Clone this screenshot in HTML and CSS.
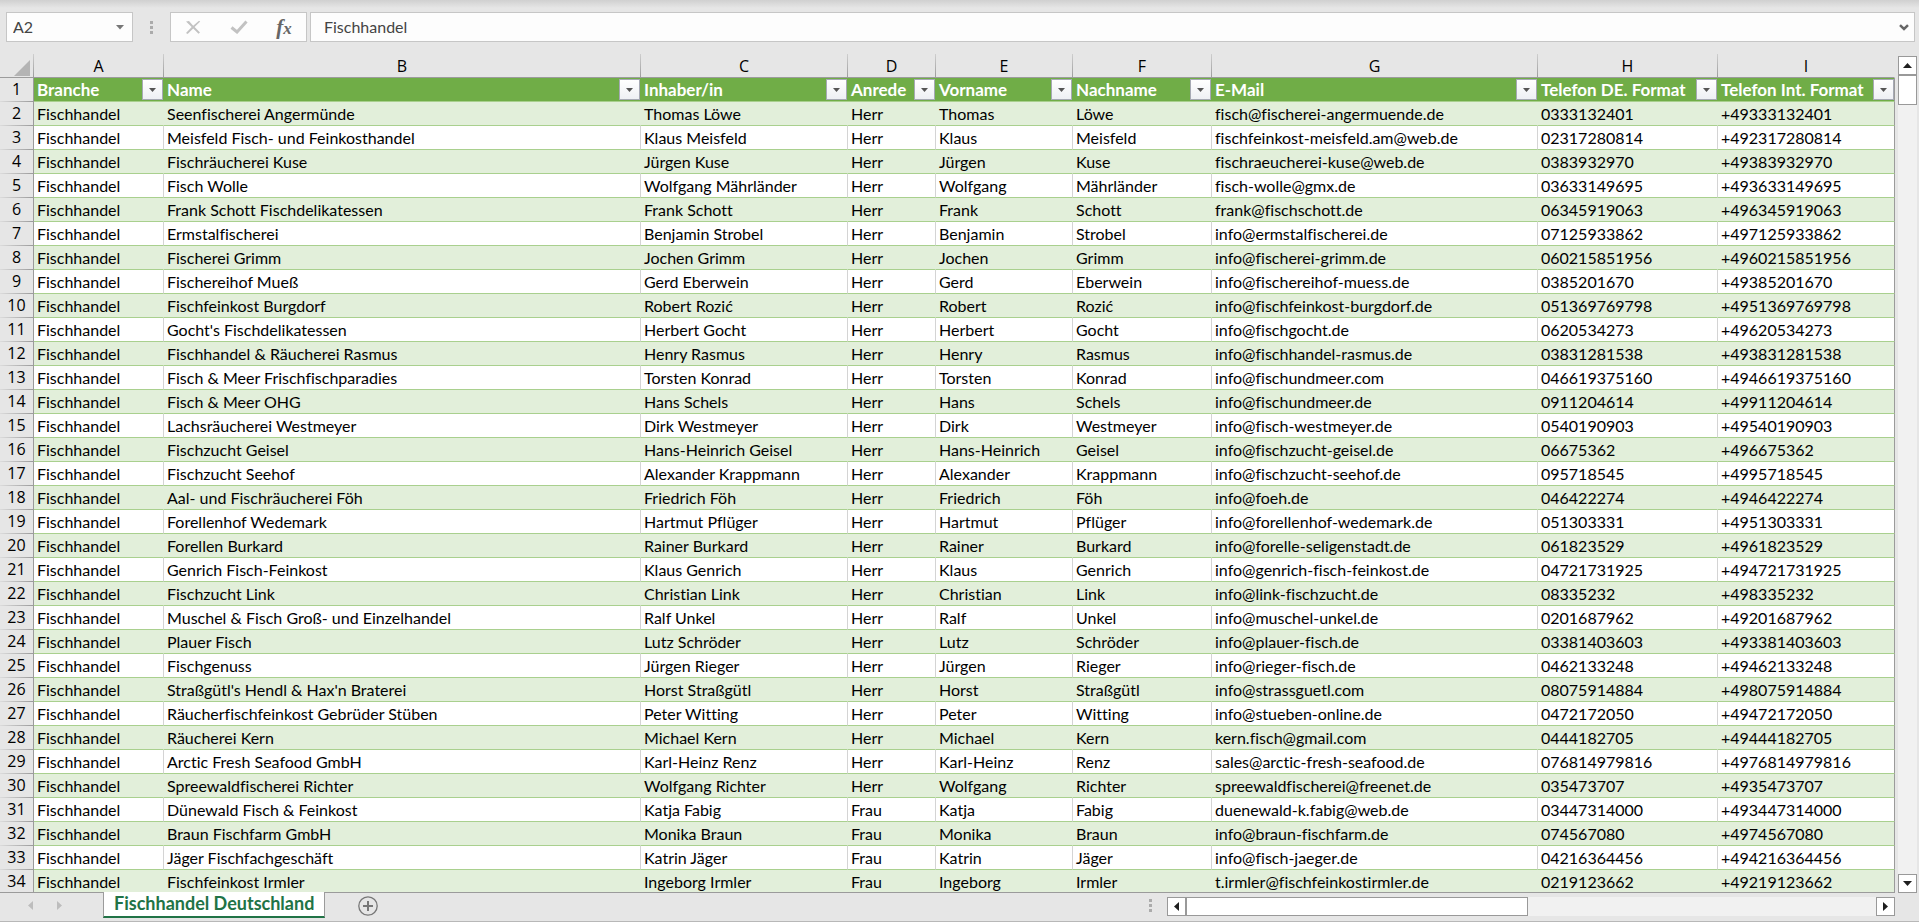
FILE: index.html
```html
<!DOCTYPE html>
<html lang="de">
<head>
<meta charset="utf-8">
<title>Fischhandel Deutschland</title>
<link rel="stylesheet" href="styles.css">
</head>
<body>
<div class="app">
  <header class="formula-bar">
    <div class="name-box">
      <input class="name-input" type="text" value="A2" aria-label="Namenfeld">
      <button class="plain name-toggle" type="button" aria-label="Namen anzeigen">
        <svg width="8" height="5" viewBox="0 0 8 5"><path d="M0 0h8L4 4.500z" fill="#777"/></svg>
      </button>
    </div>
    <span class="grip"><i></i><i></i><i></i></span>
    <div class="fx-tools">
      <button class="plain" type="button" aria-label="Abbrechen">
        <svg width="16" height="15" viewBox="0 0 16 15"><path d="M1 1.500 4 1l4.200 4.700L14 .8l1.200.7L9.600 7l5.400 5.500-1.500 1.200L8.200 8.500 2.600 14 1 13l5.700-6z" fill="#c2c2c2"/></svg>
      </button>
      <button class="plain" type="button" aria-label="Eingeben">
        <svg width="18" height="14" viewBox="0 0 18 14"><path d="M1.500 7.500 7 12 16.500 1.500" fill="none" stroke="#c2c2c2" stroke-width="3"/></svg>
      </button>
      <button class="plain fx" type="button" aria-label="Funktion einfügen"><span>f</span><span class="fx-x">x</span></button>
    </div>
    <div class="formula">
      <input class="formula-input" type="text" value="Fischhandel" aria-label="Bearbeitungsleiste">
      <button class="plain formula-toggle" type="button" aria-label="Bearbeitungsleiste erweitern">
        <svg width="10" height="7" viewBox="0 0 10 7"><path d="M1 1.200 5 5l4-3.800" fill="none" stroke="#666" stroke-width="2.500"/></svg>
      </button>
    </div>
  </header>

  <main class="workspace">
    <div class="sheet">
      <table class="grid">
        <colgroup>
          <col class="w-num"><col class="w-a"><col class="w-b"><col class="w-c"><col class="w-d"><col class="w-e"><col class="w-f"><col class="w-g"><col class="w-h"><col class="w-i">
        </colgroup>
        <thead>
          <tr class="letters">
            <th class="corner"><svg width="16" height="16" viewBox="0 0 16 16"><path d="M16 0v16H0z" fill="#b4b4b4"/></svg></th>
            <th>A</th><th>B</th><th>C</th><th>D</th><th>E</th><th>F</th><th>G</th><th>H</th><th>I</th>
          </tr>
        </thead>
        <tbody id="rows"></tbody>
      </table>
    </div>
    <div class="vscroll">
      <button class="plain scroll-btn" type="button" aria-label="Nach oben"><svg width="9" height="5" viewBox="0 0 9 5"><path d="M0 5h9L4.500 0z" fill="#1f1f1f"/></svg></button>
      <div class="v-thumb"></div>
      <div class="track"></div>
      <button class="plain scroll-btn" type="button" aria-label="Nach unten"><svg width="9" height="5" viewBox="0 0 9 5"><path d="M0 0h9L4.500 5z" fill="#1f1f1f"/></svg></button>
    </div>
  </main>

  <footer class="tab-bar">
    <button class="plain nav" type="button" aria-label="Vorheriges Blatt"><svg width="5" height="9" viewBox="0 0 5 9"><path d="M5 0v9L0 4.500z" fill="#bdbdbd"/></svg></button>
    <button class="plain nav" type="button" aria-label="Nächstes Blatt"><svg width="5" height="9" viewBox="0 0 5 9"><path d="M0 0v9l5-4.500z" fill="#bdbdbd"/></svg></button>
    <button class="plain tab" type="button">Fischhandel Deutschland</button>
    <button class="plain add" type="button" aria-label="Neues Blatt"><svg width="20" height="20" viewBox="0 0 20 20"><circle cx="10" cy="10" r="9.200" fill="none" stroke="#777" stroke-width="1.300"/><path d="M10 5v10M5 10h10" stroke="#777" stroke-width="2"/></svg></button>
    <span class="grip tab-grip"><i></i><i></i><i></i></span>
    <div class="hscroll">
      <button class="plain scroll-btn" type="button" aria-label="Nach links"><svg width="5" height="9" viewBox="0 0 5 9"><path d="M5 0v9L0 4.500z" fill="#1f1f1f"/></svg></button>
      <div class="h-thumb"></div>
      <div class="track"></div>
      <button class="plain scroll-btn" type="button" aria-label="Nach rechts"><svg width="5" height="9" viewBox="0 0 5 9"><path d="M0 0v9l5-4.500z" fill="#1f1f1f"/></svg></button>
    </div>
  </footer>
</div>
<script src="sheet.js"></script>
</body>
</html>
```

FILE: styles.css
```css
* {
  box-sizing: border-box;
}

body {
  margin: 0;
  font-family: Lato, "Open Sans", sans-serif;
  font-size: 16px;
  font-variant-ligatures: none;
  color: #000;
  background: #e6e6e6;
}

.app {
  display: flex;
  flex-direction: column;
  height: 100vh;
  overflow: hidden;
  border-bottom: 1px solid #b8b8b8;
}

.plain {
  display: flex;
  align-items: center;
  justify-content: center;
  margin: 0;
  padding: 0;
  border: 0;
  background: none;
  font: inherit;
  color: inherit;
}

/* Formula bar */
.formula-bar {
  display: flex;
  flex: none;
  height: 54px;
  padding: 12px 4px 12px 6px;
  background: linear-gradient(#d0d0d0, #e6e6e6 8px);
}

.name-box,
.fx-tools,
.formula {
  display: flex;
  align-items: center;
  border: 1px solid #c6c6c6;
  background: #fdfdfd;
}

.name-box {
  width: 127px;
}

.name-input,
.formula-input {
  flex: 1;
  min-width: 0;
  height: 28px;
  padding: 0 0 1px;
  border: 0;
  outline: 0;
  background: none;
  font: inherit;
  font-variant-ligatures: none;
  color: #444;
}

.name-input {
  padding-left: 6px;
}

.name-toggle {
  width: 24px;
}

.grip {
  display: flex;
  flex-direction: column;
  justify-content: center;
  align-items: center;
  gap: 2px;
  width: 37px;
}

.grip i {
  width: 3px;
  height: 3px;
  background: #ababab;
}

.fx-tools {
  justify-content: space-around;
  width: 137px;
  margin-right: 3px;
}

.fx {
  font-family: "Liberation Serif", serif;
  font-size: 21px;
  font-style: italic;
  font-weight: bold;
  color: #666;
}

.fx-x {
  padding-top: 4px;
  font-size: 17px;
}

.formula {
  flex: 1;
}

.formula-input {
  padding-left: 13px;
}

.formula-toggle {
  width: 20px;
}

/* Grid */
.workspace {
  display: flex;
  flex: 1;
  min-height: 0;
}

.sheet {
  flex: 1;
  overflow: hidden;
  border-bottom: 1px solid #9b9b9b;
}

.grid {
  width: 100%;
  table-layout: fixed;
  border-collapse: separate;
  border-spacing: 0;
}

.w-num { width: 34px; }
.w-a { width: 130px; }
.w-c { width: 207px; }
.w-d { width: 88px; }
.w-e { width: 137px; }
.w-f { width: 139px; }
.w-g { width: 326px; }
.w-h { width: 180px; }
.w-i { width: 177px; }

.grid th,
.grid td {
  height: 24px;
  padding: 0 0 0 3px;
  line-height: 23px;
  text-align: left;
  white-space: nowrap;
  overflow: hidden;
}

.grid .letters th {
  padding: 2px 0 0;
  border-right: 1px solid;
  border-bottom: 1px solid #9b9b9b;
  border-image: linear-gradient(#d0d0d0, #9b9b9b) 1;
  font-family: "Open Sans", sans-serif;
  font-weight: normal;
  line-height: 21px;
  text-align: center;
}

.grid .letters th:last-child {
  border-right-color: transparent;
  border-image: none;
}

.grid .letters .corner {
  padding: 4px 3px 0 0;
  line-height: 0;
  text-align: right;
}

.grid .num {
  padding: 0 0 1px;
  border-right: 1px solid #9b9b9b;
  background: linear-gradient(to right, #dcdcdc, #9b9b9b) bottom / 100% 1px no-repeat;
  font-family: "Open Sans", sans-serif;
  font-weight: normal;
  text-align: center;
}

.grid td {
  border-right: 1px solid #d4d4d4;
  border-bottom: 1px solid #a9d08e;
  background: #fff;
}

.grid .band td {
  border-right-color: #e2efda;
  background: #e2efda;
}

.grid td:last-child,
.grid .band td:last-child,
.grid .head .title:last-child {
  border-right: 1px solid #9b9b9b;
}

.grid .head .title {
  padding: 0 1px 0 3px;
  border-bottom: 1px solid #a9d08e;
  background: #70ad47;
  font-size: 17px;
  font-weight: bold;
  color: #fff;
}

.grid .head .title:last-child {
  padding-right: 0;
}

.title-inner {
  display: flex;
  align-items: center;
  justify-content: space-between;
}

.filter {
  flex: none;
  width: 21px;
  height: 21px;
  border: 1px solid #a6a9b4;
  background: linear-gradient(#fff, #eef0f4);
}

/* Scroll bars */
.vscroll {
  display: flex;
  flex-direction: column;
  width: 24px;
  padding: 2px 2px 0 3px;
}

.scroll-btn {
  flex: none;
  width: 19px;
  height: 19px;
  border: 1px solid #999;
  background: #fff;
}

.v-thumb {
  height: 30px;
  border: 1px solid #999;
  background: #fff;
}

.track {
  flex: 1;
  background: #f1f1f1;
}

/* Sheet tabs */
.tab-bar {
  display: flex;
  flex: none;
  height: 28px;
  padding: 0 24px 3px 16px;
}

.nav {
  width: 29px;
}

.tab {
  height: 26px;
  margin: -1px 33px 0 29px;
  padding: 0 10px 3px;
  border: 1px solid #9b9b9b;
  border-top: 0;
  border-bottom: 2px solid #217346;
  background: #fff;
  font-size: 18px;
  font-weight: bold;
  color: #217346;
}

.tab-grip {
  width: 12px;
  margin-left: auto;
}

.hscroll {
  display: flex;
  align-items: center;
  width: calc(39% - 5px);
  margin: 4px 0 2px 11px;
}

.h-thumb {
  width: 47%;
  height: 19px;
  border: 1px solid #999;
  background: #fff;
}

.hscroll .track {
  height: 19px;
}
```

FILE: sheet.js
```js
const titles = ["Branche", "Name", "Inhaber/in", "Anrede", "Vorname", "Nachname", "E-Mail", "Telefon DE. Format", "Telefon Int. Format"];

// name | salutation | first name | last name | mail | phone
const records = `Seenfischerei Angermünde|Herr|Thomas|Löwe|fisch@fischerei-angermuende.de|0333132401
Meisfeld Fisch- und Feinkosthandel|Herr|Klaus|Meisfeld|fischfeinkost-meisfeld.am@web.de|02317280814
Fischräucherei Kuse|Herr|Jürgen|Kuse|fischraeucherei-kuse@web.de|0383932970
Fisch Wolle|Herr|Wolfgang|Mährländer|fisch-wolle@gmx.de|03633149695
Frank Schott Fischdelikatessen|Herr|Frank|Schott|frank@fischschott.de|06345919063
Ermstalfischerei|Herr|Benjamin|Strobel|info@ermstalfischerei.de|07125933862
Fischerei Grimm|Herr|Jochen|Grimm|info@fischerei-grimm.de|060215851956
Fischereihof Mueß|Herr|Gerd|Eberwein|info@fischereihof-muess.de|0385201670
Fischfeinkost Burgdorf|Herr|Robert|Rozić|info@fischfeinkost-burgdorf.de|051369769798
Gocht's Fischdelikatessen|Herr|Herbert|Gocht|info@fischgocht.de|0620534273
Fischhandel & Räucherei Rasmus|Herr|Henry|Rasmus|info@fischhandel-rasmus.de|03831281538
Fisch & Meer Frischfischparadies|Herr|Torsten|Konrad|info@fischundmeer.com|046619375160
Fisch & Meer OHG|Herr|Hans|Schels|info@fischundmeer.de|0911204614
Lachsräucherei Westmeyer|Herr|Dirk|Westmeyer|info@fisch-westmeyer.de|0540190903
Fischzucht Geisel|Herr|Hans-Heinrich|Geisel|info@fischzucht-geisel.de|06675362
Fischzucht Seehof|Herr|Alexander|Krappmann|info@fischzucht-seehof.de|095718545
Aal- und Fischräucherei Föh|Herr|Friedrich|Föh|info@foeh.de|046422274
Forellenhof Wedemark|Herr|Hartmut|Pflüger|info@forellenhof-wedemark.de|051303331
Forellen Burkard|Herr|Rainer|Burkard|info@forelle-seligenstadt.de|061823529
Genrich Fisch-Feinkost|Herr|Klaus|Genrich|info@genrich-fisch-feinkost.de|04721731925
Fischzucht Link|Herr|Christian|Link|info@link-fischzucht.de|08335232
Muschel & Fisch Groß- und Einzelhandel|Herr|Ralf|Unkel|info@muschel-unkel.de|0201687962
Plauer Fisch|Herr|Lutz|Schröder|info@plauer-fisch.de|03381403603
Fischgenuss|Herr|Jürgen|Rieger|info@rieger-fisch.de|0462133248
Straßgütl's Hendl & Hax'n Braterei|Herr|Horst|Straßgütl|info@strassguetl.com|08075914884
Räucherfischfeinkost Gebrüder Stüben|Herr|Peter|Witting|info@stueben-online.de|0472172050
Räucherei Kern|Herr|Michael|Kern|kern.fisch@gmail.com|0444182705
Arctic Fresh Seafood GmbH|Herr|Karl-Heinz|Renz|sales@arctic-fresh-seafood.de|076814979816
Spreewaldfischerei Richter|Herr|Wolfgang|Richter|spreewaldfischerei@freenet.de|035473707
Dünewald Fisch & Feinkost|Frau|Katja|Fabig|duenewald-k.fabig@web.de|03447314000
Braun Fischfarm GmbH|Frau|Monika|Braun|info@braun-fischfarm.de|074567080
Jäger Fischfachgeschäft|Frau|Katrin|Jäger|info@fisch-jaeger.de|04216364456
Fischfeinkost Irmler|Frau|Ingeborg|Irmler|t.irmler@fischfeinkostirmler.de|0219123662`
  .split("\n").map(line => line.split("|"));

const body = document.getElementById("rows");

function addRow(number, className) {
  const row = body.insertRow();
  row.className = className;
  const num = document.createElement("th");
  num.className = "num";
  num.scope = "row";
  num.textContent = number;
  row.append(num);
  return row;
}

const head = addRow(1, "head");
for (const title of titles) {
  const cell = document.createElement("th");
  cell.className = "title";
  cell.innerHTML = `<div class="title-inner"><span>${title}</span><button class="plain filter" type="button" aria-label="${title} filtern"><svg width="7" height="4" viewBox="0 0 7 4"><path d="M0 0h7L3.500 4z" fill="#555"/></svg></button></div>`;
  head.append(cell);
}

records.forEach(([name, salutation, first, last, mail, phone], i) => {
  const row = addRow(i + 2, i % 2 === 0 ? "band" : "");
  const values = ["Fischhandel", name, `${first} ${last}`, salutation, first, last, mail, phone, "+49" + phone.slice(1)];
  for (const value of values) row.insertCell().textContent = value;
});
```
